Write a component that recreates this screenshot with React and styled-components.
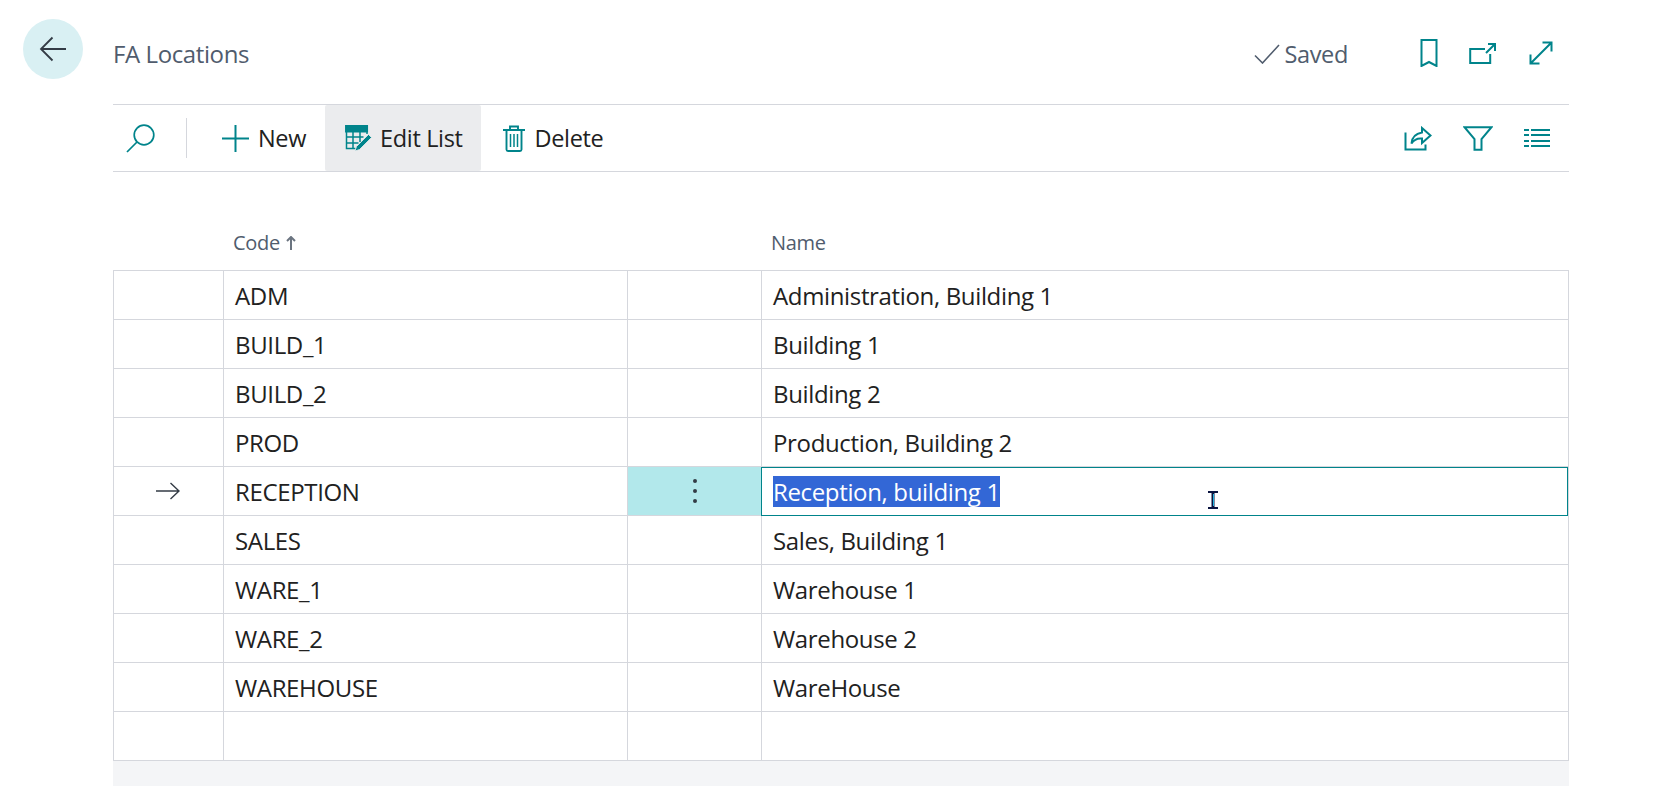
import React from "react";
import styled, { createGlobalStyle } from "styled-components";

const TEAL = "#00848b";
const LINE = "#d5d7dd";

const rows = [
  { code: "ADM", name: "Administration, Building 1" },
  { code: "BUILD_1", name: "Building 1" },
  { code: "BUILD_2", name: "Building 2" },
  { code: "PROD", name: "Production, Building 2" },
  { code: "RECEPTION", name: "Reception, building 1", active: true },
  { code: "SALES", name: "Sales, Building 1" },
  { code: "WARE_1", name: "Warehouse 1" },
  { code: "WARE_2", name: "Warehouse 2" },
  { code: "WAREHOUSE", name: "WareHouse" },
  { code: "", name: "" },
];

const Icon = ({ w, h, children, ...rest }) => (
  <IconSvg width={w} height={h} viewBox={`0 0 ${w} ${h}`} {...rest}>
    {children}
  </IconSvg>
);

const App = () => {
  return (
    <Page>
      <GlobalStyle />
      <BackColumn>
        <BackButton>
          <Icon w={28} h={26} $color="#333b45" $stroke={1.8}>
            <path d="M27 13H2M13.5 1.5L2 13l11.5 11.5" />
          </Icon>
        </BackButton>
      </BackColumn>
      <Main>
        <Header>
          <Title>FA Locations</Title>
          <SavedGroup>
            <Icon w={26} h={20} $color="#505c6d" $stroke={1.6}>
              <path d="M1 11.5l7.5 7.5L25 1" />
            </Icon>
            <SavedText>Saved</SavedText>
          </SavedGroup>
          <HeaderIcons>
            <Icon w={18} h={28} $stroke={2}>
              <path d="M1.500 1h15v26l-7.500-4-7.500 4z" />
            </Icon>
            <Icon w={28} h={22} $stroke={2}>
              <path d="M16 7H1.200v14h20v-9" />
              <path d="M19 2h7v7M26 2l-9 9" />
            </Icon>
            <Icon w={26} h={26} $stroke={2}>
              <path d="M3 23L23 3M14.500 2.500h9v9M2.500 14.500v9h9" />
            </Icon>
          </HeaderIcons>
        </Header>

        <Toolbar>
          <SearchWrap>
            <Icon w={29} h={29}>
              <circle cx="18" cy="11" r="9.8" />
              <path d="M11 18L1 28" />
            </Icon>
          </SearchWrap>
          <ToolButton $left={18} $gap={9} $right={19}>
            <Icon w={27} h={27} $stroke={2}>
              <path d="M13.5 0v27M0 13.5h27" />
            </Icon>
            New
          </ToolButton>
          <ToolButton $hover>
            <Icon w={27} h={26} $stroke={1.5}>
              <path d="M.8.8h21.500v6H.8z" fill={TEAL} />
              <path d="M1.500 6v17.500h9M1.500 12h17M1.500 18h12M8 6v17M15 6v11M22 6v3" />
              <path
                d="M23.500 9.500l3 3-12 12-4.500 1.500 1.500-4.500z"
                fill={TEAL}
                stroke="#ebecee"
                strokeWidth=".8"
              />
            </Icon>
            Edit List
          </ToolButton>
          <ToolButton $gap={10} $left={22}>
            <Icon w={22} h={27} $stroke={1.9}>
              <path d="M0 5h22M7 5V1.500h8V5M3.500 5v19.500q0 1.500 1.500 1.500h12q1.500 0 1.500-1.500V5" />
              <path d="M7.500 9v13M11 9v13M14.500 9v13" strokeWidth="1.500" />
            </Icon>
            Delete
          </ToolButton>
          <ToolbarRight>
            <Icon w={28} h={25} $stroke={2}>
              <path d="M1.500 6.500v17h20v-5" />
              <path d="M18 2l8.500 7.500L18 17v-4.500c-4.500-.5-8 1-10.500 5 .5-6.500 4.500-10 10.500-11z" />
            </Icon>
            <Icon w={30} h={25} $stroke={2}>
              <path d="M1.500 1.200h27L18.500 13v10.800h-7V13z" />
            </Icon>
            <Icon w={26} h={18} $stroke={1.8}>
              <path d="M7 1h19M7 6h19M7 12h19M7 17h19M0 1h5M0 6h5M0 12h5M0 17h5" />
            </Icon>
          </ToolbarRight>
        </Toolbar>

        <ColumnHeads>
          <span />
          <HeadLabel>
            Code
            <Icon w={10} h={14} $color="#6b7480" $stroke={2}>
              <path d="M5 14V1M1 5l4-4 4 4" />
            </Icon>
          </HeadLabel>
          <span />
          <HeadLabel>Name</HeadLabel>
        </ColumnHeads>

        <Table>
          {rows.map((row, i) => (
            <Row key={i}>
              <MarkerCell>
                {row.active && (
                  <Icon w={24} h={18} $color="#333b45" $stroke={1.4}>
                    <path d="M0 9h23M14.500 1l8.500 8-8.500 8" />
                  </Icon>
                )}
              </MarkerCell>
              <Cell>{row.code}</Cell>
              <ActionCell $active={row.active}>
                {row.active && (
                  <Dots>
                    <i />
                    <i />
                    <i />
                  </Dots>
                )}
              </ActionCell>
              {row.active ? (
                <EditCell>
                  <Selection>{row.name}</Selection>
                  <Caret>
                    <svg width="12" height="18" viewBox="0 0 12 18">
                      <path d="M1 1h10M1 17h10" stroke="#0b1440" strokeWidth="2" />
                      <path d="M6 1v16" stroke="#0b1440" strokeWidth="3" />
                      <path d="M6.500 3v12" stroke="#20b4e0" strokeWidth="1" />
                    </svg>
                  </Caret>
                </EditCell>
              ) : (
                <Cell>{row.name}</Cell>
              )}
            </Row>
          ))}
        </Table>
        <Footer />
      </Main>
    </Page>
  );
};

export default App;

const GlobalStyle = createGlobalStyle`
  html, body {
    margin: 0;
    height: 100%;
    background: #fff;
    overflow: hidden;
  }
  body {
    font-family: "Open Sans", "Noto Sans", sans-serif;
    color: #212121;
  }
`;

const IconSvg = styled.svg`
  flex: none;
  fill: none;
  stroke: ${(p) => p.$color || TEAL};
  stroke-width: ${(p) => p.$stroke || 1.7};
`;

const Page = styled.div`
  display: flex;
  height: 786px;
  width: 1668px;
`;

const BackColumn = styled.div`
  width: 113px;
  flex: none;
  padding: 19px 0 0 23px;
  box-sizing: border-box;
`;

const BackButton = styled.div`
  width: 60px;
  height: 60px;
  border-radius: 50%;
  background: #d9f0f3;
  display: flex;
  align-items: center;
  justify-content: center;
`;

const Main = styled.div`
  width: 1456px;
  flex: none;
  display: flex;
  flex-direction: column;
`;

const Header = styled.div`
  height: 105px;
  box-sizing: border-box;
  border-bottom: 1px solid ${LINE};
  display: flex;
  align-items: flex-start;
  padding-top: 38px;
`;

const Title = styled.div`
  font-size: 24px;
  line-height: 32px;
  letter-spacing: -0.4px;
  color: #505c6d;
  flex: 1;
`;

const SavedGroup = styled.div`
  display: flex;
  align-items: center;
  height: 32px;
  gap: 4px;
`;

const SavedText = styled.span`
  font-size: 23.5px;
  letter-spacing: -0.35px;
  color: #505c6d;
`;

const HeaderIcons = styled.div`
  display: flex;
  align-items: center;
  height: 28px;
  gap: 31px;
  margin: 1px 15px 0 72px;
`;

const Toolbar = styled.div`
  height: 67px;
  box-sizing: border-box;
  border-bottom: 1px solid ${LINE};
  display: flex;
  align-items: stretch;
`;

const SearchWrap = styled.div`
  width: 74px;
  box-sizing: border-box;
  padding-left: 13px;
  margin: 13px 17px 13px 0;
  border-right: 1px solid ${LINE};
  display: flex;
  align-items: center;
`;

const ToolButton = styled.div`
  display: flex;
  align-items: center;
  gap: ${(p) => p.$gap || 8}px;
  padding: 0 ${(p) => p.$right || 18}px 0 ${(p) => p.$left || 20}px;
  font-size: 23.5px;
  letter-spacing: -0.35px;
  background: ${(p) => (p.$hover ? "#ebecee" : "transparent")};
  border-radius: 2px;
`;

const ToolbarRight = styled.div`
  margin-left: auto;
  display: flex;
  align-items: center;
  gap: 31px;
  padding-right: 19px;
`;

const ColumnHeads = styled.div`
  height: 98px;
  box-sizing: border-box;
  padding-top: 59px;
  display: grid;
  grid-template-columns: 110px 404px 134px 1fr;
  align-items: start;
`;

const HeadLabel = styled.div`
  display: flex;
  align-items: center;
  gap: 6px;
  font-size: 20px;
  line-height: 24px;
  letter-spacing: -0.3px;
  color: #505c6d;
  padding-left: 10px;
`;

const Table = styled.div`
  border-top: 1px solid ${LINE};
  border-left: 1px solid ${LINE};
  border-right: 1px solid ${LINE};
`;

const Row = styled.div`
  display: grid;
  grid-template-columns: 109px 404px 134px 1fr;
  height: 49px;
  box-sizing: border-box;
  border-bottom: 1px solid ${LINE};
`;

const Cell = styled.div`
  border-left: 1px solid ${LINE};
  padding-left: 11px;
  display: flex;
  align-items: center;
  font-size: 24px;
  letter-spacing: -0.35px;
  white-space: nowrap;
`;

const MarkerCell = styled.div`
  display: flex;
  align-items: center;
  justify-content: center;
  margin-left: -1px;
`;

const ActionCell = styled.div`
  border-left: 1px solid ${LINE};
  background: ${(p) => (p.$active ? "#b2e8eb" : "transparent")};
  display: flex;
  align-items: center;
  justify-content: center;
`;

const Dots = styled.div`
  display: flex;
  flex-direction: column;
  gap: 6px;
  i {
    width: 4px;
    height: 4px;
    border-radius: 50%;
    background: #333b45;
  }
`;

const EditCell = styled(Cell)`
  position: relative;
  border: 1px solid ${TEAL};
  margin-bottom: -1px;
  box-sizing: border-box;
`;

const Selection = styled.span`
  background: #3367d6;
  color: #fff;
  height: 31px;
  line-height: 31px;
`;

const Caret = styled.div`
  position: absolute;
  left: 445px;
  top: 23px;
  line-height: 0;
`;

const Footer = styled.div`
  flex: 1;
  background: #f4f5f7;
`;
